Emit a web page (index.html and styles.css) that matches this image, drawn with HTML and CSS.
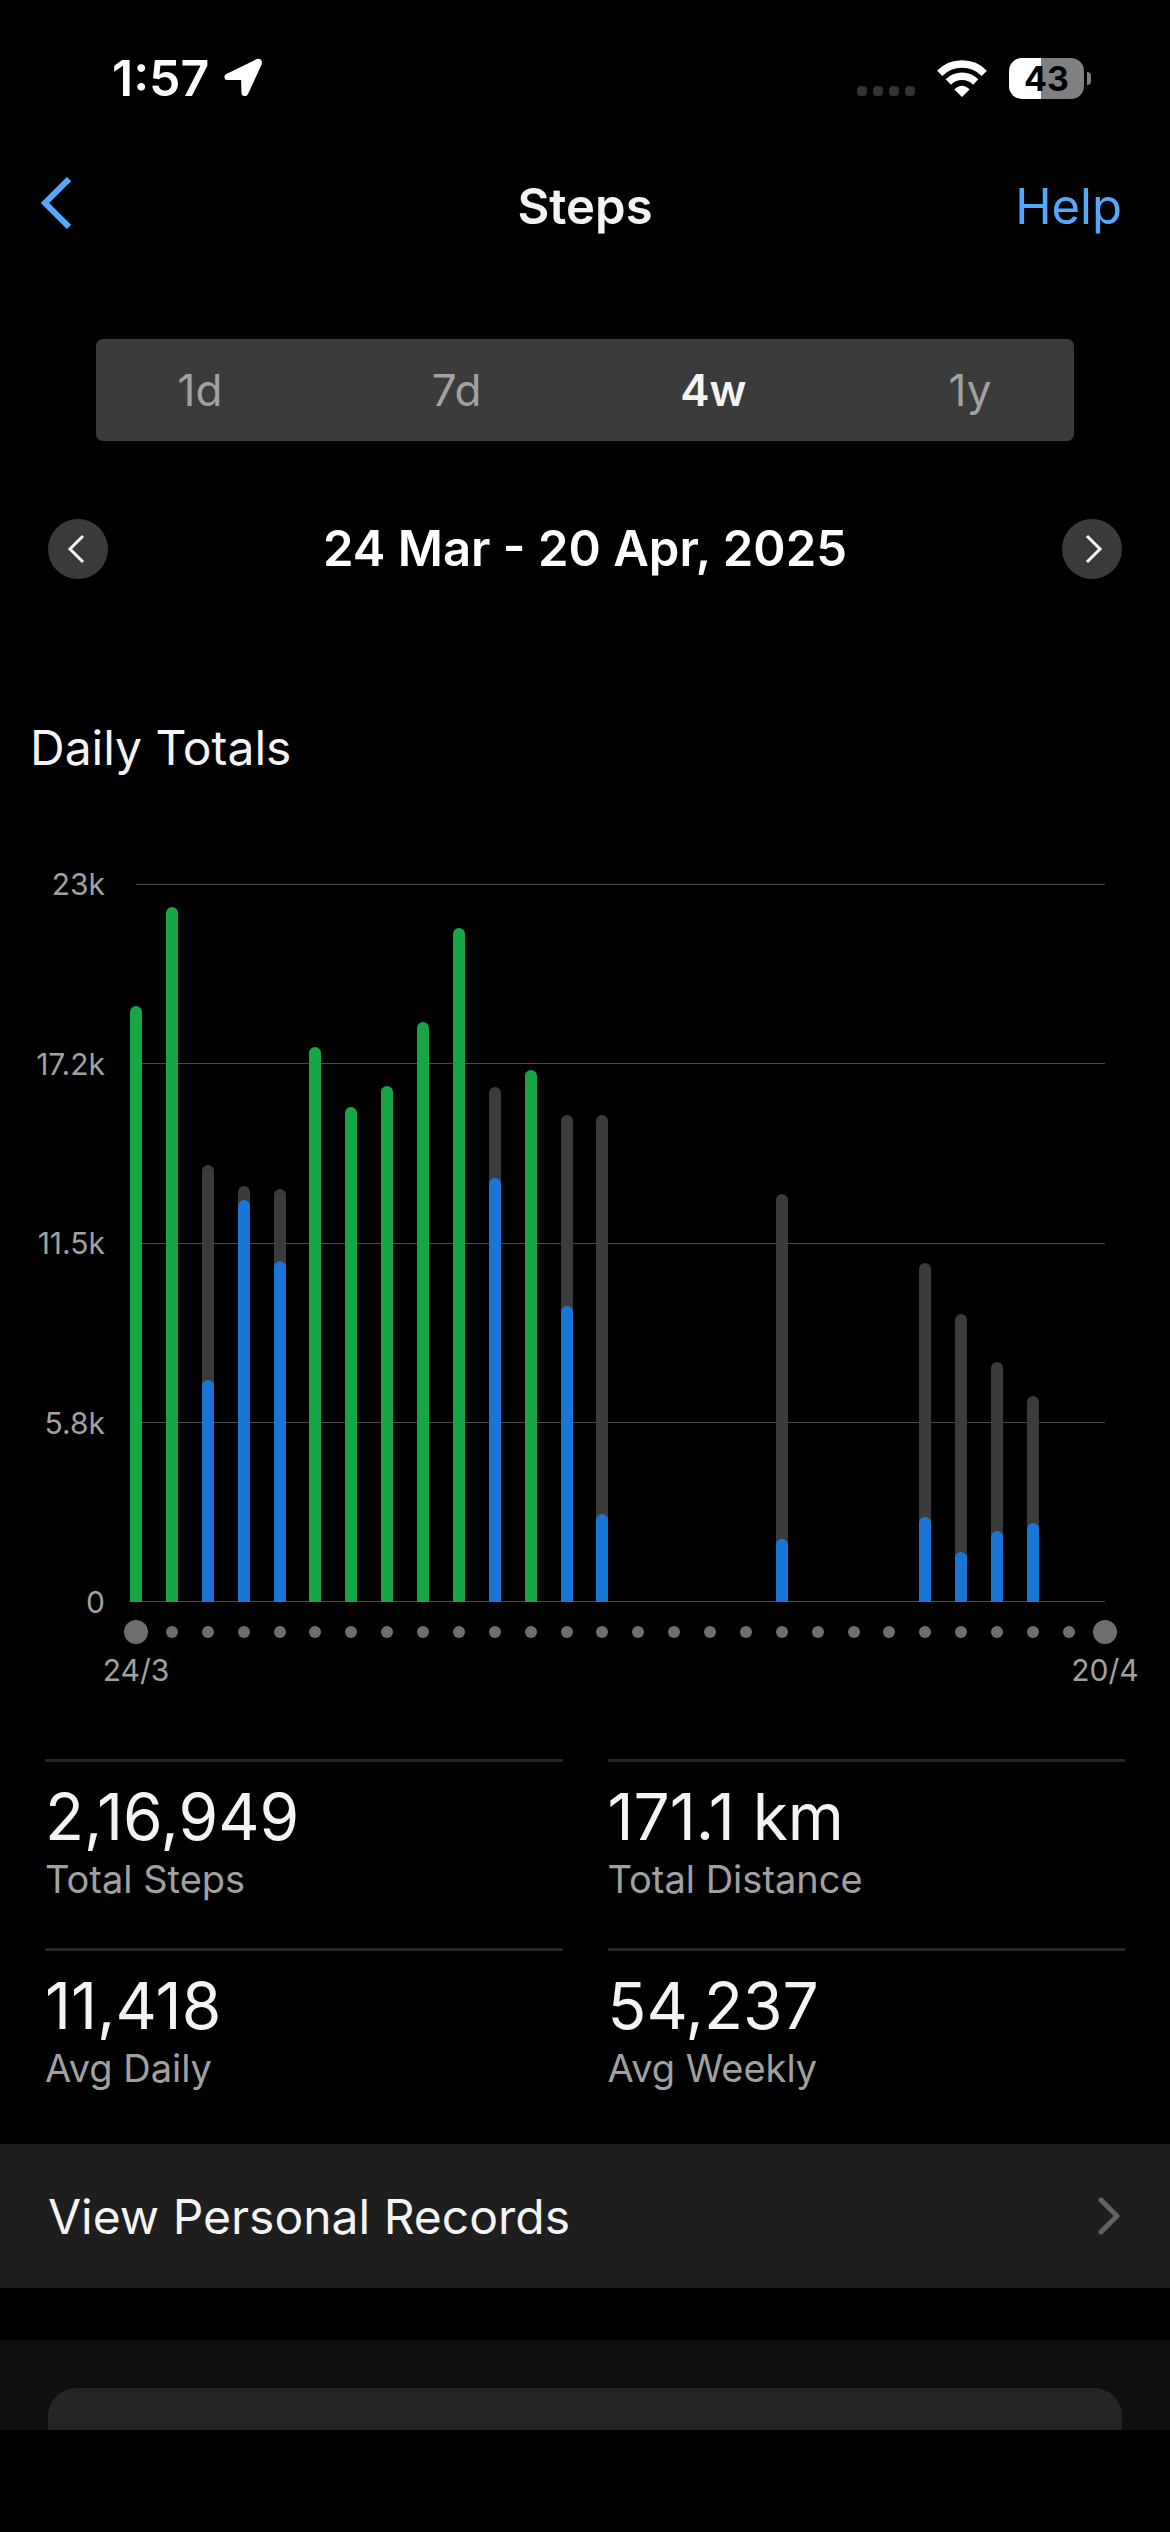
FILE: index.html
```html
<!DOCTYPE html>
<html lang="en">
<head>
<meta charset="utf-8">
<meta name="viewport" content="width=device-width, initial-scale=1">
<title>Steps</title>
<link rel="stylesheet" href="styles.css">
</head>
<body>
<div class="status-bar">
  <div class="status-left">
    <span class="clock">1:57</span>
    <svg class="location" viewBox="0 0 40 40" aria-hidden="true"><path d="M4 18.500 34.500 3.500Q37 2.800 36.300 5.500L22.500 35.500 21 35.500 20.500 19.500 4 19.500Z" fill="#fff" stroke="#fff" stroke-width="5" stroke-linejoin="round"/></svg>
  </div>
  <div class="status-right">
    <span class="signal"><i></i><i></i><i></i><i></i></span>
    <svg class="wifi" viewBox="0 0 50 37" aria-hidden="true">
      <g fill="none" stroke="#fff" stroke-width="7.500">
        <path d="M2.700 13.300a31.500 31.500 0 0 1 44.600 0"/>
        <path d="M11.300 22a19.400 19.400 0 0 1 27.400 0"/>
      </g>
      <path d="M25 37 17.400 29.500Q25 22 32.600 29.500Z" fill="#fff"/>
    </svg>
    <span class="battery"><span class="battery-body">43</span><span class="battery-cap"></span></span>
  </div>
</div>

<header class="nav">
  <button class="back" type="button" aria-label="Back"><svg viewBox="0 0 30 52" aria-hidden="true"><path d="M28 2 4 26 28 50" fill="none" stroke="#54a8ff" stroke-width="6"/></svg></button>
  <h1 class="title">Steps</h1>
  <a class="help" href="#">Help</a>
</header>

<main>
  <div class="range">
    <button type="button">1d</button>
    <button type="button">7d</button>
    <button type="button" aria-pressed="true">4w</button>
    <button type="button">1y</button>
  </div>

  <div class="period">
    <button class="round" type="button" aria-label="Previous period"><svg viewBox="0 0 60 60" aria-hidden="true"><path d="M35 17 22 30 35 43" fill="none" stroke="#f4f4f4" stroke-width="3"/></svg></button>
    <h2 class="period-text">24 Mar - 20 Apr, 2025</h2>
    <button class="round" type="button" aria-label="Next period"><svg viewBox="0 0 60 60" aria-hidden="true"><path d="M25 17 38 30 25 43" fill="none" stroke="#f4f4f4" stroke-width="3"/></svg></button>
  </div>

  <section class="totals">
    <h2 class="section-title">Daily Totals</h2>
    <div class="chart">
      <div class="y-axis"><span>23k</span><span>17.2k</span><span>11.5k</span><span>5.8k</span><span>0</span></div>
      <div class="plot">
        <div class="gridlines"><i></i><i></i><i></i><i></i><i></i></div>
        <div class="bars">
          <div class="day"><b class="met" style="--steps:19090"></b></div>
          <div class="day"><b class="met" style="--steps:22260"></b></div>
          <div class="day"><b class="goal" style="--steps:14000"></b><b class="walked" style="--steps:7110"></b></div>
          <div class="day"><b class="goal" style="--steps:13320"></b><b class="walked" style="--steps:12880"></b></div>
          <div class="day"><b class="goal" style="--steps:13230"></b><b class="walked" style="--steps:10920"></b></div>
          <div class="day"><b class="met" style="--steps:17780"></b></div>
          <div class="day"><b class="met" style="--steps:15860"></b></div>
          <div class="day"><b class="met" style="--steps:16530"></b></div>
          <div class="day"><b class="met" style="--steps:18580"></b></div>
          <div class="day"><b class="met" style="--steps:21590"></b></div>
          <div class="day"><b class="goal" style="--steps:16500"></b><b class="walked" style="--steps:13580"></b></div>
          <div class="day"><b class="met" style="--steps:17040"></b></div>
          <div class="day"><b class="goal" style="--steps:15600"></b><b class="walked" style="--steps:9480"></b></div>
          <div class="day"><b class="goal" style="--steps:15600"></b><b class="walked" style="--steps:2820"></b></div>
          <div class="day"></div>
          <div class="day"></div>
          <div class="day"></div>
          <div class="day"></div>
          <div class="day"><b class="goal" style="--steps:13070"></b><b class="walked" style="--steps:2020"></b></div>
          <div class="day"></div>
          <div class="day"></div>
          <div class="day"></div>
          <div class="day"><b class="goal" style="--steps:10860"></b><b class="walked" style="--steps:2720"></b></div>
          <div class="day"><b class="goal" style="--steps:9230"></b><b class="walked" style="--steps:1600"></b></div>
          <div class="day"><b class="goal" style="--steps:7690"></b><b class="walked" style="--steps:2270"></b></div>
          <div class="day"><b class="goal" style="--steps:6600"></b><b class="walked" style="--steps:2530"></b></div>
          <div class="day"></div>
          <div class="day"></div>
        </div>
      </div>
      <div class="x-axis">
        <div class="dots"><i></i><i></i><i></i><i></i><i></i><i></i><i></i><i></i><i></i><i></i><i></i><i></i><i></i><i></i><i></i><i></i><i></i><i></i><i></i><i></i><i></i><i></i><i></i><i></i><i></i><i></i><i></i><i></i></div>
        <div class="dates"><span>24/3</span><span>20/4</span></div>
      </div>
    </div>
  </section>

  <dl class="stats">
    <div class="stat"><dd>2,16,949</dd><dt>Total Steps</dt></div>
    <div class="stat"><dd>171.1 km</dd><dt>Total Distance</dt></div>
    <div class="stat"><dd>11,418</dd><dt>Avg Daily</dt></div>
    <div class="stat"><dd>54,237</dd><dt>Avg Weekly</dt></div>
  </dl>

  <a class="records" href="#">
    <span>View Personal Records</span>
    <svg viewBox="0 0 24 40" aria-hidden="true"><path d="M3 4 19 20 3 36" fill="none" stroke="#626264" stroke-width="5" stroke-linecap="round" stroke-linejoin="round"/></svg>
  </a>

  <section class="more"><div class="card"></div></section>
</main>
</body>
</html>
```
FILE: styles.css
```css
* {
  box-sizing: border-box;
}

body {
  margin: 0;
  background: #000;
  color: #f4f4f4;
  font-family: Inter, "Liberation Sans", sans-serif;
}

h1, h2, dl, dd {
  margin: 0;
  font-weight: 400;
}

button {
  border: 0;
  padding: 0;
  background: none;
  color: inherit;
  font: inherit;
}

a {
  text-decoration: none;
}

svg {
  display: block;
}

/* Status bar */
.status-bar {
  display: flex;
  justify-content: space-between;
  align-items: center;
  height: 56px;
  margin-top: 50px;
  padding: 0 79px 0 112px;
}

.status-left,
.status-right {
  display: flex;
  align-items: center;
  color: #fff;
}

.status-left {
  gap: 14px;
}

.status-right {
  gap: 22px;
}

.clock {
  font-size: 50px;
  font-weight: 600;
  line-height: 56px;
}

.location {
  width: 40px;
  height: 40px;
}

.signal {
  display: flex;
  gap: 6px;
  padding-top: 26px;
}

.signal i {
  width: 10px;
  height: 10px;
  border-radius: 4px;
  background: #333;
}

.wifi {
  width: 50px;
  height: 37px;
}

.battery {
  display: flex;
  align-items: center;
  gap: 3px;
}

.battery-body {
  width: 75px;
  border-radius: 13px;
  background: linear-gradient(to right, #fff 43%, #808080 43%);
  color: #000;
  font-size: 34px;
  font-weight: 700;
  line-height: 41px;
  text-align: center;
}

.battery-cap {
  width: 4px;
  height: 13px;
  border-radius: 0 4px 4px 0;
  background: #808080;
}

/* Navigation */
.nav {
  display: grid;
  grid-template-columns: 1fr auto 1fr;
  margin-top: 71px;
  padding: 0 48px 0 41px;
  font-size: 49px;
  line-height: 60px;
  padding: 0 48px;
}

.back {
  justify-self: start;
  align-self: start;
  margin-left: -7px;
}

.back svg {
  width: 30px;
  height: 52px;
}

.title {
  font-size: 49px;
  font-weight: 600;
}

.help {
  justify-self: end;
  color: #54a8ff;
}

/* Range and period */
.range {
  display: flex;
  justify-content: space-between;
  height: 102px;
  margin: 102px 96px 0;
  border-radius: 7px;
  background: #3b3b3b;
  color: #a1a1a1;
  font-size: 44px;
}

.range button {
  width: 208px;
}

.range [aria-pressed="true"] {
  color: #f4f4f4;
  font-weight: 600;
}

.period {
  display: flex;
  justify-content: space-between;
  align-items: center;
  margin-top: 78px;
  padding: 0 48px;
}

.round {
  width: 60px;
  height: 60px;
  border-radius: 50%;
  background: #3b3b3b;
}

.period-text {
  color: #fff;
  font-size: 49px;
  font-weight: 600;
  line-height: 60px;
}

/* Daily totals chart */
.section-title {
  margin-top: 139px;
  padding-left: 30px;
  font-size: 48px;
  line-height: 60px;
}

.chart {
  display: grid;
  grid-template-columns: 105px 1fr;
  column-gap: 25px;
  margin-top: 106px;
  padding-right: 59px;
  color: #a1a1a1;
  font-size: 30px;
  line-height: 36px;
}

.y-axis {
  display: flex;
  flex-direction: column;
  justify-content: space-between;
  margin: -18px 0;
  text-align: right;
}

.plot {
  position: relative;
  height: 718px;
}

.gridlines {
  position: absolute;
  inset: 0 6px;
  display: flex;
  flex-direction: column;
  justify-content: space-between;
}

.gridlines i {
  height: 1px;
  background: #484848;
}

.bars {
  position: relative;
  display: flex;
  justify-content: space-between;
  height: 100%;
}

.day {
  display: grid;
  align-items: end;
  width: 12px;
  height: 100%;
}

.day b {
  grid-area: 1 / 1;
  height: calc(var(--steps) / 23000 * 100%);
  border-radius: 6px 6px 0 0;
}

.met {
  background: #17a644;
}

.goal {
  background: #3b3b3b;
}

.walked {
  background: #1a76d6;
}

.x-axis {
  grid-column: 2;
  margin-top: 18px;
}

.dots {
  display: flex;
  justify-content: space-between;
  align-items: center;
  margin: 0 -6px;
}

.dots i {
  width: 12px;
  height: 12px;
  border-radius: 50%;
  background: #6e6e6e;
}

.dots i:first-child,
.dots i:last-child {
  width: 24px;
  height: 24px;
}

.dots i:first-child {
  margin-right: -6px;
}

.dots i:last-child {
  margin-left: -6px;
}

.dates {
  display: flex;
  justify-content: space-between;
  margin: 8px -36px 0;
}

.dates span {
  width: 84px;
  text-align: center;
}

/* Summary figures */
.stats {
  display: grid;
  grid-template-columns: 1fr 1fr;
  gap: 45px;
  margin-top: 71px;
  padding: 0 45px;
}

.stat {
  border-top: 3px solid #262626;
  padding-top: 19px;
}

.stat dd {
  font-size: 64px;
  line-height: 72px;
}

.stat dt {
  margin-top: 2px;
  color: #a1a1a1;
  font-size: 38px;
  line-height: 48px;
}

/* Records link and following card */
.records {
  display: flex;
  justify-content: space-between;
  align-items: center;
  height: 144px;
  margin-top: 52px;
  padding: 0 48px;
  background: #1e1e1e;
  color: #f4f4f4;
  font-size: 48px;
}

.records svg {
  width: 24px;
  height: 40px;
}

.more {
  margin-top: 52px;
  padding: 48px 48px 0;
  background: #0f0f0f;
}

.card {
  height: 42px;
  border-radius: 28px 28px 0 0;
  background: #252525;
}
```
